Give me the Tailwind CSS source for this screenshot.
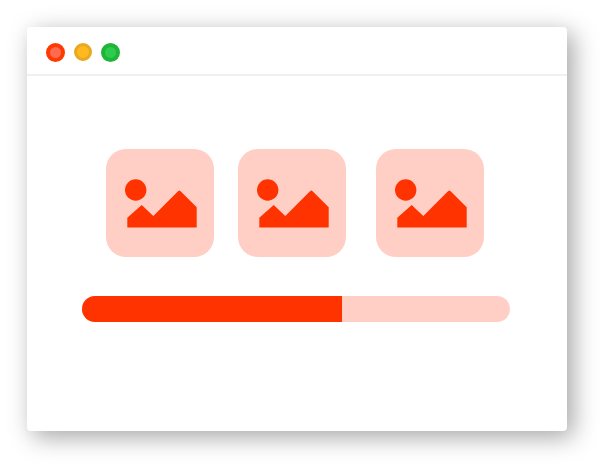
<!DOCTYPE html>
<html lang="en">
<head>
    <meta charset="UTF-8">
    <meta name="viewport" content="width=device-width, initial-scale=1.0">
    <title>Image loading</title>
    <script src="https://cdn.jsdelivr.net/npm/@tailwindcss/browser@4"></script>
</head>
<body class="bg-white h-screen overflow-hidden">

    <div class="pt-[27px] pl-[27px]">
        <!-- Window -->
        <div class="w-[539.5px] h-[404px] bg-white rounded-[4px] shadow-[6px_6px_24px_rgba(0,0,0,0.36)]">

            <!-- Title bar -->
            <div class="h-[49px] border-b-2 border-[#f0f0f0] flex items-center pl-[19px] pt-[3px]">
                <span class="w-[19px] h-[19px] rounded-full bg-[#ff6a50] border-[4px] border-[#ff3a00]"></span>
                <span class="w-[18px] h-[18px] rounded-full bg-[#ffb820] border-[3px] border-[#e8a820] ml-[9px]"></span>
                <span class="w-[19px] h-[19px] rounded-full bg-[#2ecb4e] border-[4px] border-[#1fb536] ml-[9px]"></span>
            </div>

            <!-- Thumbnails -->
            <div class="flex pl-[79px] pt-[73px]">
                <div class="w-[108px] h-[108px] rounded-[20px] bg-[#ffcfc6]">
                    <svg width="108" height="108" viewBox="0 0 108 108" fill="#ff3300">
                        <circle cx="29.7" cy="41" r="10.7"/>
                        <path d="M21.3 68.7 35.7 56 47.3 67 72 42.2Q73.3 41 74.6 42.2L90.7 58.3V78.6H21.3Z"/>
                    </svg>
                </div>
                <div class="w-[108px] h-[108px] rounded-[20px] bg-[#ffcfc6] ml-6">
                    <svg width="108" height="108" viewBox="0 0 108 108" fill="#ff3300">
                        <circle cx="29.7" cy="41" r="10.7"/>
                        <path d="M21.3 68.7 35.7 56 47.3 67 72 42.2Q73.3 41 74.6 42.2L90.7 58.3V78.6H21.3Z"/>
                    </svg>
                </div>
                <div class="w-[108px] h-[108px] rounded-[20px] bg-[#ffcfc6] ml-[30px]">
                    <svg width="108" height="108" viewBox="0 0 108 108" fill="#ff3300">
                        <circle cx="29.7" cy="41" r="10.7"/>
                        <path d="M21.3 68.7 35.7 56 47.3 67 72 42.2Q73.3 41 74.6 42.2L90.7 58.3V78.6H21.3Z"/>
                    </svg>
                </div>
            </div>

            <!-- Progress bar -->
            <div class="ml-[55px] mt-[39px] w-[428px] h-[26px] rounded-[13px] bg-[#ffcfc6] overflow-hidden">
                <div class="w-[260px] h-full bg-[#ff3300]"></div>
            </div>
        </div>
    </div>

</body>
</html>
